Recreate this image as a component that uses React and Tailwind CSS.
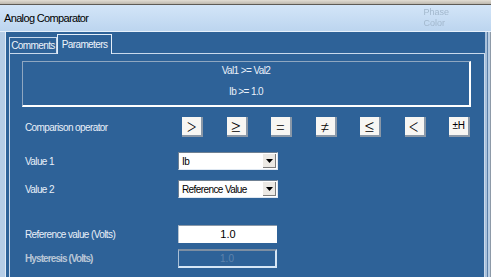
import React from 'react';

const font = { fontFamily: '"Liberation Sans", Arial, sans-serif' };

const operators = ['>', '≥', '=', '≠', '≤', '<', '±H'];

const OpButton = ({ glyph }) => {
  const small = glyph === '±H';
  return (
    <div className="flex h-[20px] w-[21px] items-center justify-center border-r-2 border-b-2 border-r-[#8a98a8] border-b-[#8a98a8] bg-[#f7f6f3] text-black">
      {small ? (
        <span className="text-[10px] leading-none tracking-[-0.3px]">{glyph}</span>
      ) : (
        <span className="text-[19px] font-extralight leading-none" style={{ fontFamily: 'Inter, "DejaVu Sans", sans-serif' }}>
          {glyph}
        </span>
      )}
    </div>
  );
};

const Dropdown = ({ value }) => (
  <div className="flex h-[18px] w-[100px] items-center border border-t-[#6f8092] border-l-[#6f8092] border-r-[#dfe8f2] border-b-[#dfe8f2] bg-white">
    <span className="flex-1 truncate pl-[3px] text-[10px] tracking-[-0.6px] text-black">{value}</span>
    <span className="mr-px flex h-[14px] w-[13px] items-center justify-center border-r border-b border-[#7d7d7d] bg-[#ece9e4]">
      <svg width="7" height="4" viewBox="0 0 7 4">
        <path d="M0 0 H7 L3.5 4 Z" fill="#000" />
      </svg>
    </span>
  </div>
);

const Row = ({ label, mt, h, dim, children }) => (
  <div className={`flex items-center ${mt} ${h}`}>
    <div
      className={`ml-[3px] w-[153px] text-[10px] ${
        dim ? 'font-bold tracking-[-0.9px] text-[#b9c6d6]' : 'tracking-[-0.6px] text-[#e9f0f9]'
      }`}
    >
      {label}
    </div>
    {children}
  </div>
);

export default function App() {
  return (
    <div className="flex h-[277px] w-[491px] flex-col overflow-hidden bg-[#2e6298]" style={font}>
      <div className="h-[5px] border-b border-[#5d5a55] bg-gradient-to-b from-[#e2ddd4] to-[#bdb8ae]" />
      <div className="flex h-[27px] items-center justify-between border-b border-[#e6f0fb] bg-gradient-to-b from-[#d3e5f8] to-[#bcd5ef] pl-[4px] pr-[42px]">
        <span className="text-[11px] tracking-[-0.65px] text-black">Analog Comparator</span>
        <div className="flex flex-col text-[9px] leading-[11px] text-[#a3b8cd] blur-[0.7px]">
          <span>Phase</span>
          <span>Color</span>
        </div>
      </div>

      <div className="flex flex-1">
        <div className="w-[6px] border-r border-[#e2ecf7] bg-[#b6cde6]" />

        <div className="flex flex-1 flex-col">
          <div className="flex h-[21px] items-end pl-[3px]">
            <div className="flex h-[16px] w-[48px] items-center justify-center border-t border-l border-r border-[#c9d9ec] text-[10px] tracking-[-0.6px] text-[#eef4fb]">
              Comments
            </div>
            <div className="relative z-10 -mb-px flex h-[20px] w-[55px] items-center justify-center border-t border-l border-r border-[#e4eef9] bg-[#2e6298] text-[10px] tracking-[-0.6px] text-[#eef4fb]">
              Parameters
            </div>
          </div>

          <div className="ml-[3px] flex-1 border-t border-l border-r border-[#c9d9ec] pl-[12px] pt-[7px]">
            <div className="flex h-[46px] w-[449px] flex-col items-center gap-[7px] border-t border-l border-t-[#8fa7c1] border-l-[#8fa7c1] border-r-2 border-b-2 border-r-white border-b-white pt-[2px] text-[10px] tracking-[-0.6px] text-[#e9f0f9]">
              <span className="h-[14px] leading-[14px]">Val1 &gt;= Val2</span>
              <span className="h-[14px] leading-[14px]">Ib &gt;= 1.0</span>
            </div>

            <Row label="Comparison operator" mt="mt-[10px]" h="h-[20px]">
              <div className="ml-[4px] flex gap-[23.5px]">
                {operators.map((g) => (
                  <OpButton key={g} glyph={g} />
                ))}
              </div>
            </Row>

            <Row label="Value 1" mt="mt-[15px]" h="h-[18px]">
              <Dropdown value="Ib" />
            </Row>

            <Row label="Value 2" mt="mt-[10px]" h="h-[18px]">
              <Dropdown value="Reference Value" />
            </Row>

            <Row label="Reference value (Volts)" mt="mt-[27px]" h="h-[18px]">
              <div className="flex h-[18px] w-[99px] items-center justify-center border-t border-l border-t-[#8a98a8] border-l-[#b8c4d0] bg-white text-[11px] text-black">
                1.0
              </div>
            </Row>

            <Row label="Hysteresis (Volts)" mt="mt-[6px]" h="h-[19px]" dim>
              <div className="flex h-[19px] w-[99px] items-center justify-center border-t-2 border-l border-t-[#7d8ea2] border-l-[#a9bfd6] border-r-2 border-b-2 border-r-[#d6e6f5] border-b-[#d6e6f5] bg-[#2e6298] text-[10px] text-[#5d82ad]">
                1.0
              </div>
            </Row>
          </div>
        </div>

        <div className="flex w-[6px]">
          <div className="w-[2px] bg-[#a9c1db]" />
          <div className="w-px bg-[#5b7fa8]" />
          <div className="w-[2px] bg-[#b9cde2]" />
          <div className="w-px bg-[#8d9aa8]" />
        </div>
      </div>
    </div>
  );
}
